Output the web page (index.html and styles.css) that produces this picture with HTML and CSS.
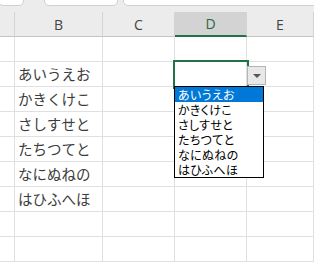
FILE: index.html
```html
<!DOCTYPE html>
<html lang="ja">
<head>
<meta charset="UTF-8">
<meta name="viewport" content="width=device-width, initial-scale=1.0">
<title>Sheet1</title>
<link rel="stylesheet" href="styles.css">
</head>
<body>
<div class="topbar">
    <div class="box box-name"></div>
    <div class="box box-fx"></div>
    <div class="box box-formula"></div>
</div>
<div class="sheet">
    <div class="hd"></div>
    <div class="hd">B</div>
    <div class="hd">C</div>
    <div class="hd hd-active">D</div>
    <div class="hd">E</div>

    <div class="c"></div><div class="c"></div><div class="c"></div><div class="c"></div><div class="c"></div>

    <div class="c"></div><div class="c txt">あいうえお</div><div class="c"></div>
    <div class="c active">
        <div class="dd-btn"><span class="arrow"></span></div>
        <ul class="dd-list">
            <li class="sel">あいうえお</li>
            <li>かきくけこ</li>
            <li>さしすせと</li>
            <li>たちつてと</li>
            <li>なにぬねの</li>
            <li>はひふへほ</li>
        </ul>
    </div>
    <div class="c"></div>

    <div class="c"></div><div class="c txt">かきくけこ</div><div class="c"></div><div class="c"></div><div class="c"></div>
    <div class="c"></div><div class="c txt">さしすせと</div><div class="c"></div><div class="c"></div><div class="c"></div>
    <div class="c"></div><div class="c txt">たちつてと</div><div class="c"></div><div class="c"></div><div class="c"></div>
    <div class="c"></div><div class="c txt">なにぬねの</div><div class="c"></div><div class="c"></div><div class="c"></div>
    <div class="c"></div><div class="c txt">はひふへほ</div><div class="c"></div><div class="c"></div><div class="c"></div>
    <div class="c"></div><div class="c"></div><div class="c"></div><div class="c"></div><div class="c"></div>
    <div class="c"></div><div class="c"></div><div class="c"></div><div class="c"></div><div class="c"></div>
</div>
</body>
</html>
```

FILE: styles.css
```css
body {
    margin: 0;
    padding: 0;
    width: 314px;
    height: 262px;
    overflow: hidden;
    background: #fff;
    font-family: "Noto Sans CJK JP", sans-serif;
}

.topbar {
    height: 12px;
    background-color: #ececec;
    display: flex;
    align-items: flex-start;
    overflow: hidden;
}
.box {
    height: 10px;
    margin-top: -6px;
    background: #fff;
    border: 1px solid #d0d0d0;
    border-radius: 0 0 5px 5px;
}
.box-name {
    width: 24px;
    margin-left: -2px;
}
.box-fx {
    width: 72px;
    margin-left: 20px;
}
.box-formula {
    flex: 1;
    margin-left: 5px;
    margin-right: -10px;
}

.sheet {
    display: grid;
    grid-template-columns: 15px 88px 72px 72px 67px;
    grid-auto-rows: 25px;
}

.hd {
    background-color: #ececec;
    border-right: 1px solid #d4d4d4;
    border-bottom: 1px solid #c4c4c4;
    font-family: "Open Sans", "Noto Sans", sans-serif;
    font-size: 14px;
    color: #444;
    display: flex;
    align-items: center;
    justify-content: center;
}
.hd-active {
    background-color: #d3d3d3;
    color: #1e6b41;
    border-bottom: 2px solid #217346;
}

.c {
    border-right: 1px solid #e0e0e0;
    border-bottom: 1px solid #e0e0e0;
}
.txt {
    font-size: 14.5px;
    color: #3c3c3c;
    padding-left: 3px;
    line-height: 24px;
    white-space: nowrap;
}

.active {
    position: relative;
    outline: 2px solid #217346;
    z-index: 2;
}

.dd-btn {
    position: absolute;
    left: 72px;
    top: 4px;
    width: 17px;
    height: 17px;
    background: #e8e8e8;
    border: 1px solid #b4b4b4;
    display: flex;
    align-items: center;
    justify-content: center;
}
.arrow {
    width: 0;
    height: 0;
    border-left: 4px solid transparent;
    border-right: 4px solid transparent;
    border-top: 4px solid #555;
}

.dd-list {
    position: absolute;
    left: -1px;
    top: 24px;
    width: 88px;
    margin: 0;
    padding: 0;
    list-style: none;
    background: #fff;
    border: 1px solid #000;
}
.dd-list li {
    height: 15px;
    line-height: 15px;
    font-size: 12px;
    letter-spacing: 0.3px;
    font-feature-settings: "palt";
    color: #000;
    padding-left: 3px;
    white-space: nowrap;
    overflow: hidden;
}
.dd-list li.sel {
    background: #0078d7;
    color: #fff;
}
```
